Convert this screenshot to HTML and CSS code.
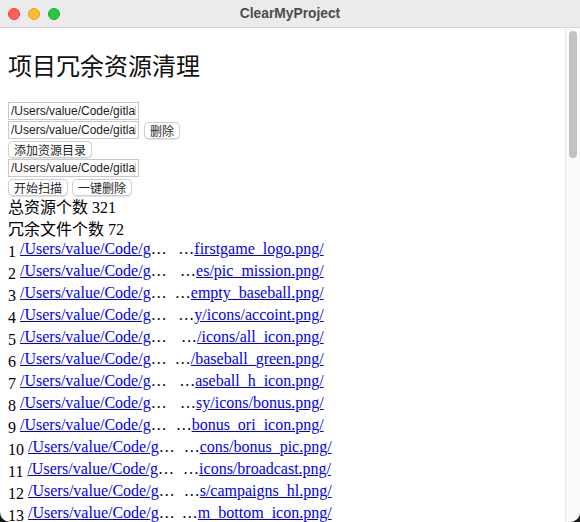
FILE: index.html
```html
<!DOCTYPE html>
<html lang="zh-CN">
<head>
<meta charset="utf-8">
<title>ClearMyProject</title>
<link rel="stylesheet" href="styles.css">
</head>
<body>
<div class="window">
  <div class="titlebar">
    <div class="lights">
      <span class="light red"></span>
      <span class="light yellow"></span>
      <span class="light green"></span>
    </div>
    <div class="title">ClearMyProject</div>
  </div>
  <div class="viewport">
    <main class="page">
      <h2 class="heading">项目冗余资源清理</h2>
      <div class="controls">
        <div class="row"><input class="path" type="text" value="/Users/value/Code/gitlab/project/res"></div>
        <div class="row"><input class="path" type="text" value="/Users/value/Code/gitlab/project/assets"><button class="btn">删除</button></div>
        <div class="row"><button class="btn">添加资源目录</button></div>
        <div class="row"><input class="path" type="text" value="/Users/value/Code/gitlab/project/src"></div>
        <div class="row"><button class="btn">开始扫描</button><button class="btn">一键删除</button></div>
      </div>
      <div class="stat">总资源个数 321</div>
      <div class="stat">冗余文件个数 72</div>
      <ol class="files">
        <li class="file"><span class="num">1</span> <a class="head" href="#">/Users/value/Code/g</a><span class="ell">…</span> <span class="tail"><span class="ell">…</span><a href="#">firstgame_logo.png/</a></span></li>
        <li class="file"><span class="num">2</span> <a class="head" href="#">/Users/value/Code/g</a><span class="ell">…</span> <span class="tail"><span class="ell">…</span><a href="#">es/pic_mission.png/</a></span></li>
        <li class="file"><span class="num">3</span> <a class="head" href="#">/Users/value/Code/g</a><span class="ell">…</span> <span class="tail"><span class="ell">…</span><a href="#">empty_baseball.png/</a></span></li>
        <li class="file"><span class="num">4</span> <a class="head" href="#">/Users/value/Code/g</a><span class="ell">…</span> <span class="tail"><span class="ell">…</span><a href="#">y/icons/accoint.png/</a></span></li>
        <li class="file"><span class="num">5</span> <a class="head" href="#">/Users/value/Code/g</a><span class="ell">…</span> <span class="tail"><span class="ell">…</span><a href="#">/icons/all_icon.png/</a></span></li>
        <li class="file"><span class="num">6</span> <a class="head" href="#">/Users/value/Code/g</a><span class="ell">…</span> <span class="tail"><span class="ell">…</span><a href="#">/baseball_green.png/</a></span></li>
        <li class="file"><span class="num">7</span> <a class="head" href="#">/Users/value/Code/g</a><span class="ell">…</span> <span class="tail"><span class="ell">…</span><a href="#">aseball_h_icon.png/</a></span></li>
        <li class="file"><span class="num">8</span> <a class="head" href="#">/Users/value/Code/g</a><span class="ell">…</span> <span class="tail"><span class="ell">…</span><a href="#">sy/icons/bonus.png/</a></span></li>
        <li class="file"><span class="num">9</span> <a class="head" href="#">/Users/value/Code/g</a><span class="ell">…</span> <span class="tail"><span class="ell">…</span><a href="#">bonus_ori_icon.png/</a></span></li>
        <li class="file"><span class="num">10</span> <a class="head" href="#">/Users/value/Code/g</a><span class="ell">…</span> <span class="tail"><span class="ell">…</span><a href="#">cons/bonus_pic.png/</a></span></li>
        <li class="file"><span class="num">11</span> <a class="head" href="#">/Users/value/Code/g</a><span class="ell">…</span> <span class="tail"><span class="ell">…</span><a href="#">icons/broadcast.png/</a></span></li>
        <li class="file"><span class="num">12</span> <a class="head" href="#">/Users/value/Code/g</a><span class="ell">…</span> <span class="tail"><span class="ell">…</span><a href="#">s/campaigns_hl.png/</a></span></li>
        <li class="file"><span class="num">13</span> <a class="head" href="#">/Users/value/Code/g</a><span class="ell">…</span> <span class="tail"><span class="ell">…</span><a href="#">m_bottom_icon.png/</a></span></li>
      </ol>
    </main>
    <div class="scrollbar"><div class="thumb"></div></div>
  </div>
</div>
</body>
</html>
```
FILE: styles.css
```css
html, body {
  margin: 0;
  padding: 0;
  background: #1a1a1a;
}
.window {
  width: 580px;
  height: 522px;
  display: flex;
  flex-direction: column;
  background: #ffffff;
  overflow: hidden;
  border-radius: 0 0 10px 10px;
}
.titlebar {
  position: relative;
  height: 28px;
  flex: none;
  background: #ebebeb;
  border-bottom: 1px solid #d6d6d6;
  box-sizing: border-box;
  display: flex;
  align-items: center;
  justify-content: center;
}
.lights {
  position: absolute;
  left: 8px;
  top: 8px;
  display: flex;
  gap: 8px;
}
.light {
  width: 12px;
  height: 12px;
  border-radius: 50%;
  box-sizing: border-box;
}
.red { background: #fe5f57; border: 0.5px solid #e14640; }
.yellow { background: #febc2e; border: 0.5px solid #dfa023; }
.green { background: #28c840; border: 0.5px solid #1aab29; }
.title {
  font-family: "Liberation Sans", Arial, sans-serif;
  font-weight: bold;
  font-size: 13.8px;
  color: #4c4c4c;
}
.viewport {
  flex: 1;
  display: flex;
  min-height: 0;
}
.page {
  flex: 1;
  min-width: 0;
  overflow: hidden;
  padding: 8px;
  font-family: "Liberation Serif", "Noto Sans CJK SC", serif;
  font-size: 16px;
  color: #000;
}
.heading {
  margin: 16px 0 20px;
  font-family: "Liberation Serif", "Noto Sans CJK SC", serif;
  font-size: 24px;
  font-weight: normal;
  line-height: 30px;
  color: #111;
}
.controls {
  display: flex;
  flex-direction: column;
  gap: 1px;
}
.row {
  display: flex;
  gap: 5px;
  align-items: center;
  height: 18px;
}
.path {
  width: 131px;
  height: 18px;
  box-sizing: border-box;
  margin: 0;
  padding: 0 2px;
  border: 1px solid #c8c8c8;
  font-family: "Liberation Sans", Arial, sans-serif;
  font-size: 12px;
  color: #1d1d1d;
  background: #fff;
  outline: none;
}
.btn {
  height: 17px;
  box-sizing: border-box;
  margin: 0;
  padding: 0 5px;
  border: 1px solid #cfcfcf;
  border-radius: 5px;
  background: #fff;
  box-shadow: 0 0.5px 1px rgba(0,0,0,0.12);
  font-family: "Noto Sans CJK SC", sans-serif;
  font-size: 12px;
  line-height: 15px;
  color: #262626;
}
.row .btn + .btn { margin-left: -1px; }
.stat {
  line-height: 21px;
  margin-top: 1px;
}
.files {
  list-style: none;
  margin: -1px 0 0;
  padding: 0;
}
.file {
  line-height: 18px;
  white-space: nowrap;
  height: 22px;
  display: flex;
  align-items: flex-end;
}
.num {
  display: inline-block;
  line-height: 18px;
  margin-right: 4px;
}
.file a {
  color: #0000ee;
  text-decoration: underline;
}
.head {
  display: inline-block;
  margin-bottom: 3px;
}
.file > .ell {
  display: inline-block;
  width: 16px;
  margin-bottom: 3px;
}
.tail {
  display: inline-block;
  width: 153px;
  margin-left: 4px;
  text-align: right;
  margin-bottom: 3px;
}
.scrollbar {
  width: 15px;
  flex: none;
  background: #fafafa;
  border-left: 1px solid #e8e8e8;
  box-sizing: border-box;
  padding: 3px 3px 0 3px;
}
.thumb {
  height: 127px;
  border-radius: 4px;
  background: #c2c2c2;
}
```
